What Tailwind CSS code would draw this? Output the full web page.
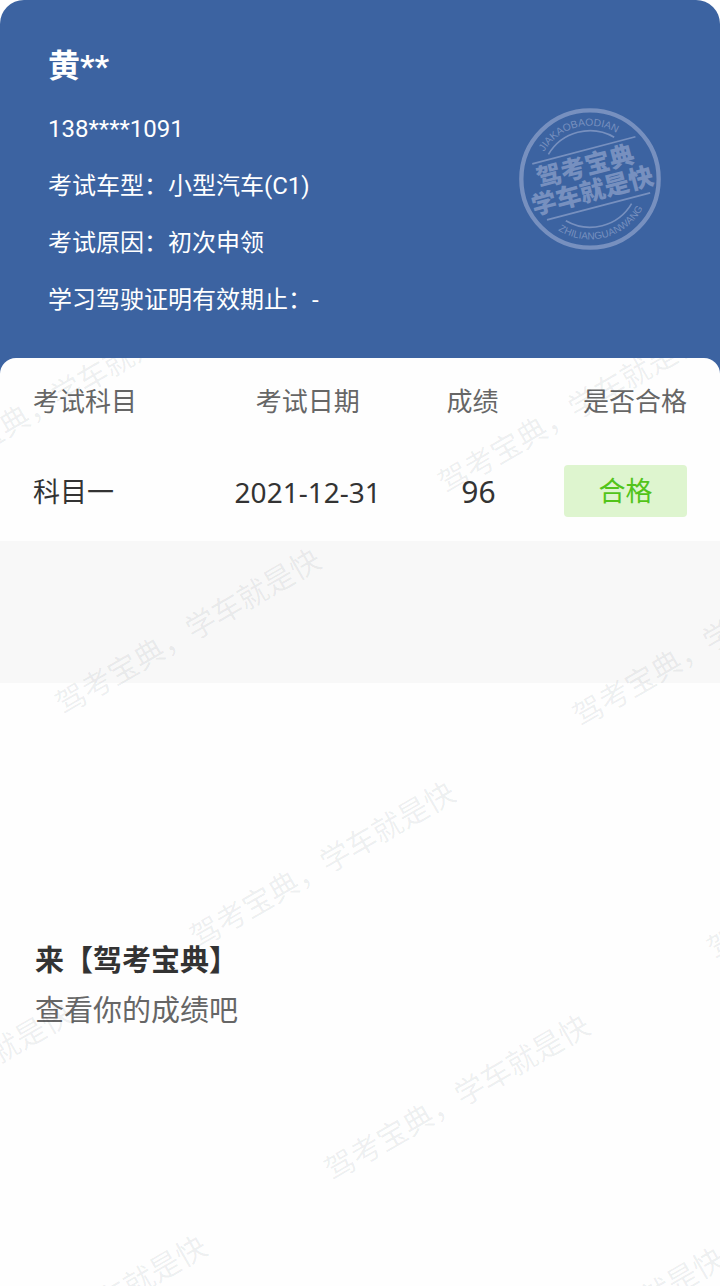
<!DOCTYPE html>
<html lang="zh-CN">
<head>
<meta charset="utf-8">
<meta name="viewport" content="width=device-width, initial-scale=1">
<title>考试成绩</title>
<script src="https://cdn.jsdelivr.net/npm/@tailwindcss/browser@4"></script>
</head>
<body class="bg-white font-['Roboto','Noto_Sans_CJK_SC',sans-serif]">
<main class="flex min-h-screen flex-col overflow-hidden rounded-t-3xl bg-[#3c63a1]">
  <header class="flex items-start justify-between pt-11 pr-[59px] pb-[29px] pl-12 text-white">
    <div>
      <h1 class="text-[32px] leading-[44px] font-bold">黄**</h1>
      <div class="mt-[13px] text-[24px] leading-[57px]">
        <p>138****1091</p>
        <p>考试车型：小型汽车(C1)</p>
        <p>考试原因：初次申领</p>
        <p>学习驾驶证明有效期止：-</p>
      </div>
    </div>
    <svg class="mt-16 size-[142px] shrink-0" viewBox="57 54 426 426" fill="none" stroke="#7790bf" role="img" aria-label="驾考宝典印章">
      <circle cx="270" cy="267" r="206" stroke-width="13"/>
      <g transform="rotate(-14.7 270 267)">
        <path id="seal-top" d="M110 267A160 160 0 0 1 430 267" stroke="none"/>
        <path id="seal-bottom" d="M89 267A181 181 0 0 0 451 267" stroke="none"/>
        <path d="M168 164A145 145 0 0 1 372 164M168 370A145 145 0 0 0 372 370M114 179H434M114 353H434" stroke-width="5"/>
        <g fill="#7790bf" stroke="none" text-anchor="middle">
          <text font-size="31" font-family="Liberation Sans"><textPath href="#seal-top" startOffset="50%">JIAKAOBAODIAN</textPath></text>
          <text font-size="30" font-family="Liberation Sans"><textPath href="#seal-bottom" startOffset="50%">ZHILIANGUANWANG</textPath></text>
          <g font-size="75" font-weight="900" font-family="Noto Sans CJK SC">
            <text x="266" y="253">驾考宝典</text>
            <text x="268" y="330">学车就是快</text>
          </g>
        </g>
      </g>
    </svg>
  </header>

  <div class="relative flex-1 overflow-hidden rounded-t-2xl bg-[#fefefe]">
    <section class="px-[33px] pb-6">
      <table class="w-full table-fixed font-['Noto_Sans','Noto_Sans_CJK_SC',sans-serif] text-[#333]">
        <thead>
          <tr class="h-[86px] text-[26px] leading-10 text-[#666]">
            <th scope="col" class="w-[25%] text-left font-normal">考试科目</th>
            <th scope="col" class="w-[34%] font-normal">考试日期</th>
            <th scope="col" class="w-[17%] pr-1 font-normal">成绩</th>
            <th scope="col" class="w-[24%] text-right font-normal">是否合格</th>
          </tr>
        </thead>
        <tbody>
          <tr class="h-[94px] text-[27px] leading-10">
            <td class="pt-0.5">科目一</td>
            <td class="pt-0.5 text-center text-[28px]">2021-12-31</td>
            <td class="pt-0.5 pl-2 text-center text-[30px]">96</td>
            <td><span class="ml-auto block w-[123px] rounded bg-[#def5cf] text-center leading-[52px] text-[#52c41a]">合格</span></td>
          </tr>
        </tbody>
      </table>
    </section>
    <div class="-mt-[21px] h-[142px] bg-[#f8f8f8]"></div>
    <section class="px-[35px] pt-[253px] pb-12 text-[29px] leading-[50px]">
      <h2 class="font-bold text-[#333]">来【驾考宝典】</h2>
      <p class="text-[#666]">查看你的成绩吧</p>
    </section>

    <!-- Tilted watermark grid -->
    <svg class="pointer-events-none absolute top-0 left-0 h-full w-full" aria-hidden="true">
      <g transform="translate(71 341) rotate(-30)" font-size="30" font-family="Noto Sans CJK SC" fill="#0a2030" fill-opacity="0.07">
        <text x="-15" y="-258">驾考宝典，学车就是快</text>
        <text x="-15" y="11">驾考宝典，学车就是快</text>
        <text x="-15" y="280">驾考宝典，学车就是快</text>
        <text x="-15" y="549">驾考宝典，学车就是快</text>
        <text x="-15" y="818">驾考宝典，学车就是快</text>
        <text x="427" y="11">驾考宝典，学车就是快</text>
        <text x="427" y="280">驾考宝典，学车就是快</text>
        <text x="427" y="549">驾考宝典，学车就是快</text>
        <text x="-457" y="280">驾考宝典，学车就是快</text>
        <text x="-457" y="549">驾考宝典，学车就是快</text>
      </g>
    </svg>
  </div>
</main>
</body>
</html>
